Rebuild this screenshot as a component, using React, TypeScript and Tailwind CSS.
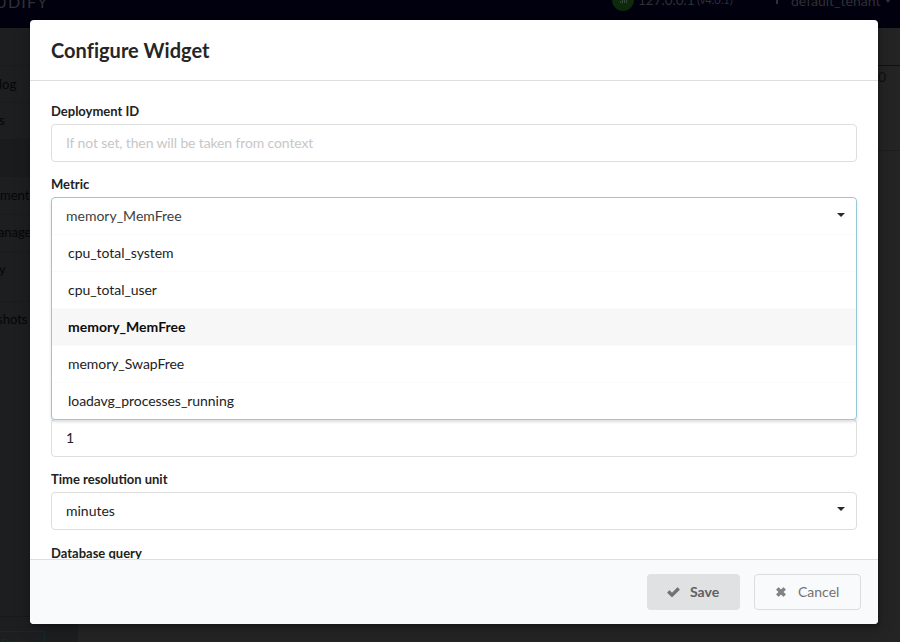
import React from 'react';

const menuRows = [
  { text: '', box: 'h-[37px]', pad: '' },
  { text: 'log', box: 'h-[37px] border-t', pad: '-ml-[1px] pt-[1px]' },
  { text: 's', box: 'h-[37px] border-t', pad: '-ml-[1px]' },
  { text: '', box: 'h-[38px] bg-[#1a1b1c]', pad: '' },
  { text: 'ment', box: 'h-[37px]', pad: 'pt-[1px]' },
  { text: 'anage', box: 'h-[37px] border-t', pad: '-ml-[2px] tracking-[-0.1px]' },
  { text: 'y', box: 'h-[50px] border-t pb-[13px]', pad: '-ml-[1px]' },
  { text: 'shots', box: 'h-[37px] border-t', pad: '-ml-[3px]' },
];

const options = ['cpu_total_system', 'cpu_total_user', 'memory_MemFree', 'memory_SwapFree', 'loadavg_processes_running'];

function Caret() {
  return <span className="mr-[11.5px] mb-[3px] h-0 w-0 border-x-[4px] border-t-[4px] border-x-transparent border-t-[#2a2a2a]" />;
}

function Field({ label, children }: { label?: string; children?: React.ReactNode }) {
  return (
    <div className="h-[73.75px] shrink-0">
      <div className="h-[22px] text-[13px] leading-[18px] font-bold text-[#222]">{label}</div>
      {children}
    </div>
  );
}

const box = 'flex h-[38px] items-center justify-between rounded-[4px] border border-[#dededf] pl-[14px] text-[14px]';

function Backdrop() {
  return (
    <div className="flex h-full flex-col">
      <header className="relative h-[28px] shrink-0 bg-[#00000f] text-[#303034]">
        <div className="flex h-[14px] items-end">
          <span className="-mt-[8px] ml-[-5px] h-[21px] w-[618px] text-[16px] leading-[18px] tracking-[1.2px]">UDIFY</span>
        </div>
        <div className="absolute top-[-11px] left-[612px] flex h-[22px] items-center whitespace-nowrap">
          <span className="flex h-[22px] w-[22px] items-end justify-center gap-[1px] rounded-full bg-[#0d2b0b] pb-[8px]">
            <i className="h-[2px] w-[1px] bg-[#3a4a3a]" />
            <i className="h-[3px] w-[1px] bg-[#3a4a3a]" />
            <i className="h-[4px] w-[1px] bg-[#3a4a3a]" />
            <i className="h-[6px] w-[1px] bg-[#3a4a3a]" />
          </span>
          <span className="ml-[4px] w-[59px] text-[13.5px]">127.0.0.1</span>
          <span className="w-[64px] pt-[1px] text-[11px]">(v4.0.1)</span>
          <svg className="ml-[11px] h-[10px] w-[10px]" viewBox="0 0 10 10" fill="currentColor">
            <path d="M4 0h2v3h3v2H6v4H4V5H1V3h3z" />
          </svg>
          <span className="ml-[9px] w-[94px] text-[14px]">default_tenant</span>
          <i className="mt-[2px] h-0 w-0 border-x-[3.5px] border-t-[4px] border-x-transparent border-t-[#303034]" />
        </div>
      </header>
      <div className="flex flex-1">
        <aside className="flex w-[78px] shrink-0 flex-col bg-[#1d1e20] text-[13px] text-[#060606]">
          {menuRows.map((r, i) => (
            <div key={i} className={`flex items-center border-[#1a1b1c] ${r.box}`}>
              <span className={r.pad}>{r.text}</span>
            </div>
          ))}
          <div className="mt-auto h-[26px] overflow-hidden border-t border-[#17191a] pt-[14px]">
            <div className="-ml-[5px] h-[30px] w-[50px] rounded-[3px] border border-[#0b2f2c] pt-[2px] pl-[6px] text-[12px] text-[#0b2f2c]">Rese</div>
          </div>
        </aside>
        <main className="flex flex-1 flex-col items-end bg-[#242424]">
          <div className="h-[38px] w-full border-b border-[#111]" />
          <div className="h-[85px] w-full border-b border-[#1d1d1d] pr-[14px] text-right text-[14px] text-[#101010]">0</div>
        </main>
      </div>
    </div>
  );
}

export default function App() {
  return (
    <div className="relative h-[642px] w-[900px] overflow-hidden font-['Lato','Liberation_Sans',sans-serif] text-[#222]">
      <Backdrop />
      <section className="absolute top-[20px] left-[30px] flex h-[604px] w-[848px] flex-col overflow-hidden rounded-[4px] bg-white shadow-[1px_3px_3px_0_rgba(0,0,0,0.2),1px_3px_15px_2px_rgba(0,0,0,0.2)]">
        <h1 className="flex h-[61px] shrink-0 items-center border-b border-[#dededf] pl-[21px] text-[20px] font-bold tracking-[0.03px] text-[#262626]">Configure Widget</h1>
        <form className="flex h-[478px] shrink-0 flex-col overflow-hidden px-[21px] pt-[20.6px]">
          <Field label="Deployment ID">
            <div className={`${box} pb-[0.5px] tracking-[-0.13px] text-[#c7c7c7]`}>If not set, then will be taken from context</div>
          </Field>
          <Field label="Metric">
            <div className="relative z-10 h-[222.4px] overflow-visible rounded-[4px] border border-[#96c8da] bg-white text-[14px] shadow-[0_2px_3px_0_rgba(34,36,38,0.15)]">
              <div className="flex h-[36px] items-center justify-between pl-[14px] text-[#404040]">
                <span className="pb-[2px]">memory_MemFree</span>
                <Caret />
              </div>
              {options.map((o) => (
                <div
                  key={o}
                  className={`flex h-[36.9px] items-center border-t border-[#fafafa] pb-[0.7px] pl-[16px] ${o === 'memory_MemFree' ? 'bg-[#f7f7f7] font-bold text-[#0d0d0d]' : 'tracking-[-0.05px]'}`}
                >
                  {o}
                </div>
              ))}
            </div>
          </Field>
          <div className="h-[147.5px] shrink-0" />
          <Field>
            <div className={`${box} pb-[0.5px]`}>1</div>
          </Field>
          <Field label="Time resolution unit">
            <div className={`${box} pb-[2px]`}>
              minutes
              <Caret />
            </div>
          </Field>
          <Field label="Database query" />
        </form>
        <footer className="flex flex-1 justify-end gap-[14px] border-t border-[#dededf] bg-[#f9fafb] pt-[14px] pr-[17px]">
          <button className="flex h-[36px] w-[93px] items-center rounded-[4px] bg-[#e0e1e2] pb-[1px] pl-[20px] text-[14px] font-bold text-[#5f6061]">
            <svg className="mr-[10px] h-[12px] w-[13px]" viewBox="0 0 13 12" fill="#717273">
              <path d="M.4 6.2 2.1 4.5a.5.5 0 0 1 .7 0L5 6.7l5.2-5.2a.5.5 0 0 1 .7 0l1.7 1.7a.5.5 0 0 1 0 .7l-7.2 7.2a.6.6 0 0 1-.8 0L.4 6.9a.5.5 0 0 1 0-.7z" />
            </svg>
            Save
          </button>
          <button className="flex h-[36px] w-[107px] items-center rounded-[4px] border border-[#dcddde] pb-[1px] pl-[21px] text-[14px] text-[#717273]">
            <svg className="mt-[1px] mr-[12px] h-[10px] w-[10px]" viewBox="0 0 10 10" fill="#818283">
              <path d="M2.2.4a.5.5 0 0 1 .7 0L5 2.5 7.1.4a.5.5 0 0 1 .7 0l1.8 1.8a.5.5 0 0 1 0 .7L7.5 5l2.1 2.1a.5.5 0 0 1 0 .7L7.8 9.6a.5.5 0 0 1-.7 0L5 7.5 2.9 9.6a.5.5 0 0 1-.7 0L.4 7.8a.5.5 0 0 1 0-.7L2.500 5 .4 2.9a.5.5 0 0 1 0-.7z" />
            </svg>
            Cancel
          </button>
        </footer>
      </section>
    </div>
  );
}
